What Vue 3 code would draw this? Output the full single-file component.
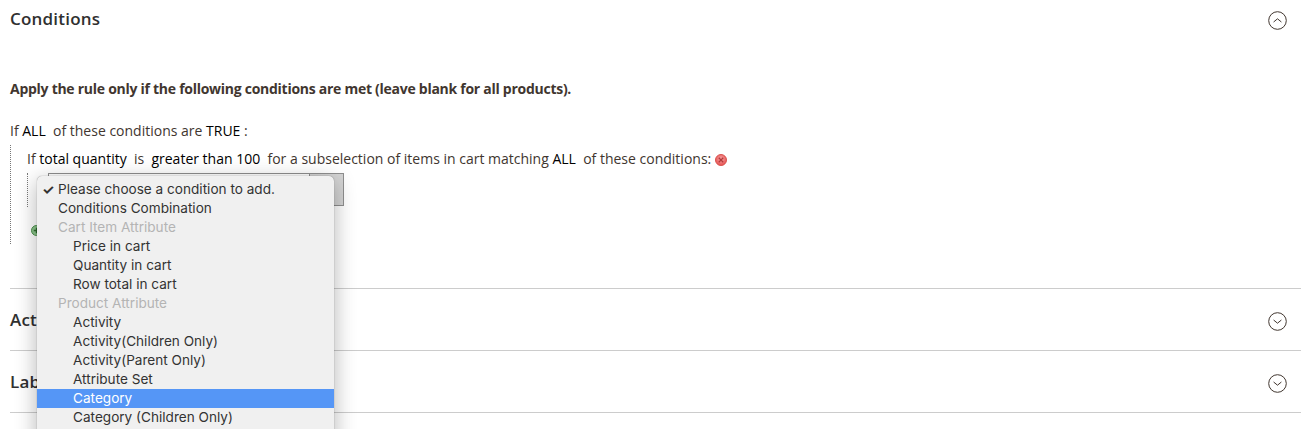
<script setup>
const menu = [
  { label: 'Please choose a condition to add.', checked: true },
  { label: 'Conditions Combination' },
  { label: 'Cart Item Attribute', group: true },
  { label: 'Price in cart', child: true },
  { label: 'Quantity in cart', child: true },
  { label: 'Row total in cart', child: true },
  { label: 'Product Attribute', group: true },
  { label: 'Activity', child: true },
  { label: 'Activity(Children Only)', child: true },
  { label: 'Activity(Parent Only)', child: true },
  { label: 'Attribute Set', child: true },
  { label: 'Category', child: true, active: true },
  { label: 'Category (Children Only)', child: true },
]
</script>

<template>
  <div class="page">
    <section class="panel open">
      <div class="head">
        <h2>Conditions</h2>
        <svg class="toggle" width="19" height="19" viewBox="0 0 19 19">
          <circle cx="9.5" cy="9.5" r="8.8" />
          <path d="M5.6 11 L9.5 7.8 L13.4 11" />
        </svg>
      </div>
      <p class="lead">Apply the rule only if the following conditions are met (leave blank for all products).</p>
      <p class="rule">If <b>ALL</b>&nbsp; of these conditions are <b>TRUE</b> :</p>
      <div class="tree">
        <p class="rule">
          If <b>total quantity</b>&nbsp; is&nbsp; <b>greater than</b> <b>100</b>&nbsp; for a subselection of items in cart matching <b>ALL</b>&nbsp; of these conditions:
          <svg class="remove" width="12" height="12" viewBox="0 0 12 12">
            <defs>
              <radialGradient id="redball" cx="50%" cy="40%" r="60%">
                <stop offset="0" stop-color="#f6a5a5" />
                <stop offset="1" stop-color="#e64f4f" />
              </radialGradient>
            </defs>
            <circle cx="6" cy="6" r="5.5" fill="url(#redball)" stroke="#d9534f" />
            <path d="M3.8 3.8 L8.2 8.2 M8.2 3.8 L3.8 8.2" stroke="#b23a3a" stroke-width="1.3" />
          </svg>
        </p>
        <div class="subtree">
          <div class="fake-select">
            <span class="fake-arrow"></span>
          </div>
        </div>
        <svg class="add" width="11" height="11" viewBox="0 0 11 11">
          <circle cx="5.5" cy="5.5" r="5" fill="#8cc68c" stroke="#4d8f4d" />
          <path d="M5.5 2.8 V8.2 M2.8 5.5 H8.2" stroke="#2f6b2f" stroke-width="1.4" />
        </svg>
      </div>

      <ul class="menu">
        <li
          v-for="item in menu"
          :key="item.label"
          :class="{ group: item.group, child: item.child, active: item.active }"
        >
          <span v-if="item.checked" class="check">✓</span>
          {{ item.label }}
        </li>
      </ul>
    </section>

    <section class="panel closed">
      <div class="head">
        <h2>Actions</h2>
        <svg class="toggle" width="19" height="19" viewBox="0 0 19 19">
          <circle cx="9.5" cy="9.5" r="8.8" />
          <path d="M5.6 8 L9.5 11.2 L13.4 8" />
        </svg>
      </div>
    </section>
    <section class="panel closed">
      <div class="head">
        <h2>Labels</h2>
        <svg class="toggle" width="19" height="19" viewBox="0 0 19 19">
          <circle cx="9.5" cy="9.5" r="8.8" />
          <path d="M5.6 8 L9.5 11.2 L13.4 8" />
        </svg>
      </div>
    </section>
  </div>
</template>

<style>
html, body {
  margin: 0;
  background: #fff;
  overflow: hidden;
}
</style>

<style scoped>
.page {
  height: 429px;
  overflow: hidden;
  padding-left: 10px;
  font-family: "Open Sans", sans-serif;
  font-size: 14px;
  color: #41362f;
}
.panel {
  position: relative;
}
.open {
  height: 288px;
  border-bottom: 1px solid #ccc;
}
.closed {
  height: 61px;
  border-bottom: 1px solid #ccc;
}
.head {
  display: flex;
  justify-content: space-between;
  align-items: center;
  height: 36px;
  padding-right: 14px;
}
.closed .head {
  height: 60px;
}
h2 {
  margin: 0;
  font-size: 17px;
  font-weight: 600;
  color: #303030;
  letter-spacing: 0.2px;
}
.toggle {
  margin-top: 4px;
  fill: none;
  stroke: #41362f;
  stroke-width: 1;
}
.lead {
  margin: 43px 0 0;
  font-weight: 700;
  font-size: 14px;
  line-height: 20px;
  letter-spacing: -0.27px;
}
.rule {
  margin: 0;
  line-height: 20px;
  font-size: 14px;
}
.lead + .rule {
  margin-top: 22px;
}
.rule b {
  font-weight: 400;
  color: #000;
}
.tree {
  margin-top: 4px;
  padding: 4px 0 0 16px;
  border-left: 1px dotted #777;
  height: 95px;
}
.subtree {
  margin-top: 4px;
  padding-left: 20px;
  border-left: 1px dotted #777;
  height: 34px;
}
.fake-select {
  width: 296px;
  height: 33px;
  box-sizing: border-box;
  border: 1px solid #8f8f8f;
  background: #fff;
  display: flex;
  justify-content: flex-end;
}
.fake-arrow {
  width: 33px;
  background: #d4d4d4;
  border-left: 1px solid #8f8f8f;
}
.remove {
  vertical-align: -2px;
}
.add {
  display: block;
  margin: 18px 0 0 4px;
}
.menu {
  position: absolute;
  left: 27px;
  top: 176px;
  width: 297px;
  margin: 0;
  padding: 4px 0 40px;
  list-style: none;
  box-sizing: border-box;
  background: #f0f0f0;
  border-radius: 5px;
  box-shadow: 0 0 1px rgba(0, 0, 0, 0.5), 0 5px 22px rgba(0, 0, 0, 0.3);
  font-family: Inter, sans-serif;
  font-size: 13.6px;
  color: #333;
  z-index: 2;
}
.menu li {
  position: relative;
  height: 19px;
  line-height: 19px;
  padding-left: 21px;
  white-space: nowrap;
}
.menu li.child {
  padding-left: 36px;
}
.menu li.group {
  color: #b4b4b4;
}
.menu li.active {
  background: #5596f6;
  color: #fff;
}
.check {
  position: absolute;
  left: 5px;
  font-size: 14px;
  font-weight: 700;
}
</style>
